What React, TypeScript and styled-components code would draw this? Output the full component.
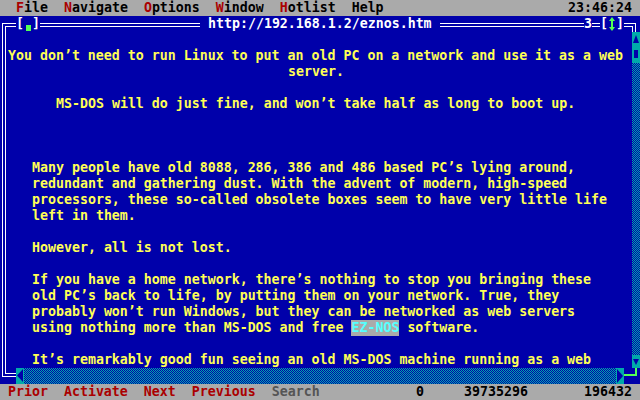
import React from "react";
import styled, { createGlobalStyle } from "styled-components";

const C = {
  blue: "#0000AA",
  gray: "#AAAAAA",
  red: "#AA0000",
  yellow: "#FFFF55",
  green: "#55FF55",
  cyan: "#55FFFF",
  teal: "#00AAAA",
  white: "#FFFFFF",
  dark: "#555555",
  black: "#000000",
};

const Global = createGlobalStyle`
  html, body { margin: 0; padding: 0; background: ${C.blue}; overflow: hidden; }
  * { box-sizing: border-box; }
`;

const Screen = styled.div`
  width: 640px;
  height: 400px;
  display: flex;
  flex-direction: column;
  font-family: "DejaVu Sans Mono", "Liberation Mono", monospace;
  font-size: 13.288px;
  font-weight: bold;
  line-height: 16px;
  background: ${C.blue};
`;

/* ---------- menu bar ---------- */
const MenuBar = styled.div`
  height: 16px;
  flex: none;
  display: flex;
  gap: 16px;
  padding: 0 8px 0 16px;
  background: ${C.gray};
  color: ${C.black};
  white-space: pre;
`;
const MenuItem = styled.span``;
const HotKey = styled.span`
  color: ${C.red};
`;
const Clock = styled.span`
  margin-left: auto;
`;

/* ---------- window ---------- */
const Window = styled.div`
  flex: 1;
  display: grid;
  grid-template-columns: 8px 1fr 8px;
  grid-template-rows: 16px 1fr 16px;
  background: ${C.blue};
`;

const TitleBar = styled.div`
  grid-column: 1 / -1;
  display: flex;
  color: ${C.white};
`;

const Cells = styled.span<{ $n: number }>`
  display: inline-block;
  flex: none;
  width: ${(p) => p.$n * 8}px;
  height: 16px;
  overflow: hidden;
  white-space: pre;
`;

const Rule = styled.span<{ $n: number }>`
  flex: none;
  width: ${(p) => p.$n * 8}px;
  height: 4px;
  margin-top: 7px;
  border-top: 1px solid ${C.white};
  border-bottom: 1px solid ${C.white};
`;

const CornerCell = styled.div`
  flex: none;
  width: 8px;
  height: 16px;
  display: flex;
`;
const TLOuter = styled.div`
  flex: 1;
  display: flex;
  margin: 7px 0 0 2px;
  border-top: 1px solid ${C.white};
  border-left: 1px solid ${C.white};
`;
const TLInner = styled.div`
  flex: 1;
  margin: 2px 0 0 2px;
  border-top: 1px solid ${C.white};
  border-left: 1px solid ${C.white};
`;
const TROuter = styled.div`
  width: 4px;
  height: 9px;
  margin-top: 7px;
  display: flex;
  border-top: 1px solid ${C.white};
  border-right: 1px solid ${C.white};
`;
const TRInner = styled.div`
  width: 1px;
  margin-top: 2px;
  border-top: 1px solid ${C.white};
  border-left: 1px solid ${C.white};
`;

const BoxGlyph = styled.span`
  display: inline-flex;
  flex: none;
  width: 8px;
  height: 16px;
  padding: 9px 0 0 2px;
`;
const BoxMark = styled.span`
  width: 5px;
  height: 6px;
  background: ${C.green};
`;

const GlyphSvg = styled.svg`
  display: block;
  flex: none;
`;

const SideRule = styled.div`
  display: flex;
`;
const SideLines = styled.div`
  width: 4px;
  margin-left: 2px;
  border-left: 1px solid ${C.white};
  border-right: 1px solid ${C.white};
`;

const Page = styled.div`
  color: ${C.yellow};
  overflow: hidden;
`;
const Line = styled.div<{ $indent: number }>`
  height: 16px;
  white-space: pre;
  padding-left: ${(p) => p.$indent * 8}px;
`;
const Link = styled.span`
  display: inline-block;
  height: 16px;
  background: ${C.gray};
  color: ${C.cyan};
`;

/* ---------- scroll bars ---------- */
const dither = `
  background-color: ${C.blue};
  background-image: conic-gradient(${C.teal} 0 25%, transparent 0 50%, ${C.teal} 0 75%, transparent 0);
  background-size: 2px 2px;
`;

const VScroll = styled.div`
  display: flex;
  flex-direction: column;
`;
const ArrowBox = styled.div<{ $h: number }>`
  flex: none;
  height: ${(p) => p.$h}px;
  background: ${C.teal};
`;
const Thumb = styled.div`
  flex: none;
  height: 16px;
  display: flex;
  justify-content: center;
  padding-top: 3px;
  background: ${C.teal};
`;
const ThumbMark = styled.div`
  width: 4px;
  height: 8px;
  background: ${C.blue};
`;
const Track = styled.div`
  flex: 1;
  ${dither}
`;

const BottomBar = styled.div`
  grid-column: 1 / -1;
  display: flex;
`;
const BLCell = styled.div`
  flex: none;
  width: 16px;
  display: flex;
`;
const BLOuter = styled.div`
  flex: 1;
  height: 9px;
  margin-left: 2px;
  display: flex;
  border-left: 1px solid ${C.white};
  border-bottom: 1px solid ${C.white};
`;
const BLInner = styled.div`
  flex: 1;
  height: 6px;
  margin-left: 2px;
  border-left: 1px solid ${C.white};
  border-bottom: 1px solid ${C.white};
`;
const HArrow = styled.div`
  flex: none;
  width: 8px;
  height: 16px;
  background: ${C.teal};
`;
const HTrack = styled.div`
  flex: 1;
  ${dither}
`;
const ConnectorCell = styled.div`
  flex: none;
  width: 16px;
`;
const ConnectorLine = styled.div`
  width: 13px;
  height: 8px;
  border-right: 2px solid ${C.green};
  border-bottom: 2px solid ${C.green};
`;

/* ---------- status bar ---------- */
const StatusBar = styled.div`
  height: 16px;
  flex: none;
  display: flex;
  padding-left: 8px;
  background: ${C.gray};
  color: ${C.black};
  white-space: pre;
`;
const KeyGroup = styled.div`
  flex: none;
  width: 312px;
  display: flex;
  gap: 16px;
`;
const StatusKey = styled.span<{ $disabled?: boolean }>`
  color: ${(p) => (p.$disabled ? C.dark : C.red)};
`;
const StatusNum = styled.span`
  flex: none;
  width: 104px;
  text-align: right;
`;

type Row = { indent: number; text?: string; parts?: React.ReactNode };

const rows: Row[] = [
  { indent: 0 },
  { indent: 0, text: "You don’t need to run Linux to put an old PC on a network and use it as a web" },
  { indent: 35, text: "server." },
  { indent: 0 },
  { indent: 6, text: "MS-DOS will do just fine, and won’t take half as long to boot up." },
  { indent: 0 },
  { indent: 0 },
  { indent: 0 },
  { indent: 3, text: "Many people have old 8088, 286, 386 and 486 based PC’s lying around," },
  { indent: 3, text: "redundant and gathering dust. With the advent of modern, high-speed" },
  { indent: 3, text: "processors, these so-called obsolete boxes seem to have very little life" },
  { indent: 3, text: "left in them." },
  { indent: 0 },
  { indent: 3, text: "However, all is not lost." },
  { indent: 0 },
  { indent: 3, text: "If you have a home network, there’s nothing to stop you bringing these" },
  { indent: 3, text: "old PC’s back to life, by putting them on your network. True, they" },
  { indent: 3, text: "probably won’t run Windows, but they can be networked as web servers" },
  {
    indent: 3,
    parts: (
      <>
        {"using nothing more than MS-DOS and free "}
        <Link>EZ-NOS</Link>
        {" software."}
      </>
    ),
  },
  { indent: 0 },
  { indent: 3, text: "It’s remarkably good fun seeing an old MS-DOS machine running as a web" },
];

const menu: [string, string][] = [
  ["F", "ile"],
  ["N", "avigate"],
  ["O", "ptions"],
  ["W", "indow"],
  ["H", "otlist"],
  ["", "Help"],
];

export default function App() {
  return (
    <>
      <Global />
      <Screen>
        <MenuBar>
          {menu.map(([hot, rest]) => (
            <MenuItem key={rest}>
              {hot && <HotKey>{hot}</HotKey>}
              {rest}
            </MenuItem>
          ))}
          <Clock>23:46:24</Clock>
        </MenuBar>

        <Window>
          <TitleBar>
            <CornerCell>
              <TLOuter>
                <TLInner />
              </TLOuter>
            </CornerCell>
            <Rule $n={1} />
            <Cells $n={1}>[</Cells>
            <BoxGlyph>
              <BoxMark />
            </BoxGlyph>
            <Cells $n={1}>]</Cells>
            <Rule $n={20} />
            <Cells $n={30}> http://192.168.1.2/eznos.htm </Cells>
            <Rule $n={18} />
            <Cells $n={1}>3</Cells>
            <Rule $n={1} />
            <Cells $n={1}>[</Cells>
            <GlyphSvg width={8} height={16} viewBox="0 0 8 16">
              <polygon points="4,1 1,5 7,5" fill={C.green} />
              <rect x={3} y={5} width={2} height={6} fill={C.green} />
              <polygon points="1,11 7,11 4,15" fill={C.green} />
            </GlyphSvg>
            <Cells $n={1}>]</Cells>
            <Rule $n={1} />
            <CornerCell>
              <TROuter>
                <TRInner />
              </TROuter>
            </CornerCell>
          </TitleBar>

          <SideRule>
            <SideLines />
          </SideRule>

          <Page>
            {rows.map((r, i) => (
              <Line key={i} $indent={r.indent}>
                {r.parts ?? r.text ?? ""}
              </Line>
            ))}
          </Page>

          <VScroll>
            <ArrowBox $h={15}>
              <GlyphSvg width={8} height={15} viewBox="0 0 8 15">
                <polygon points="4,3 1,11 7,11" fill={C.blue} />
              </GlyphSvg>
            </ArrowBox>
            <Thumb>
              <ThumbMark />
            </Thumb>
            <Track />
            <ArrowBox $h={13}>
              <GlyphSvg width={8} height={13} viewBox="0 0 8 13">
                <polygon points="1,4 7,4 4,10" fill={C.blue} />
              </GlyphSvg>
            </ArrowBox>
          </VScroll>

          <BottomBar>
            <BLCell>
              <BLOuter>
                <BLInner />
              </BLOuter>
            </BLCell>
            <HArrow>
              <GlyphSvg width={8} height={16} viewBox="0 0 8 16">
                <polygon points="1,7.5 7,1 7,14" fill={C.blue} />
              </GlyphSvg>
            </HArrow>
            <HTrack />
            <HArrow>
              <GlyphSvg width={8} height={16} viewBox="0 0 8 16">
                <polygon points="1,1 7,8 1,15" fill={C.blue} />
              </GlyphSvg>
            </HArrow>
            <ConnectorCell>
              <ConnectorLine />
            </ConnectorCell>
          </BottomBar>
        </Window>

        <StatusBar>
          <KeyGroup>
            <StatusKey>Prior</StatusKey>
            <StatusKey>Activate</StatusKey>
            <StatusKey>Next</StatusKey>
            <StatusKey>Previous</StatusKey>
            <StatusKey $disabled>Search</StatusKey>
          </KeyGroup>
          <StatusNum>0</StatusNum>
          <StatusNum>39735296</StatusNum>
          <StatusNum>196432</StatusNum>
        </StatusBar>
      </Screen>
    </>
  );
}
